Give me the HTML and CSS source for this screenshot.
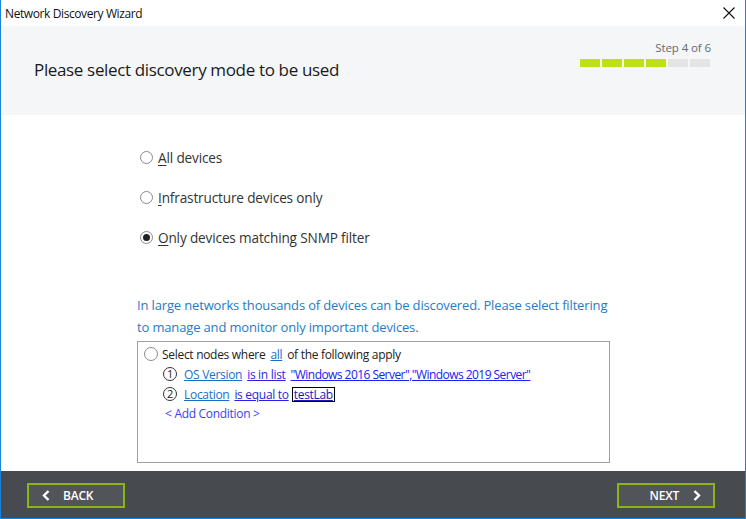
FILE: index.html
```html
<!DOCTYPE html>
<html>
<head>
<meta charset="utf-8">
<link rel="stylesheet" href="styles.css">
</head>
<body>
<div class="window">
  <div class="titlebar">
    <span class="title">Network Discovery Wizard</span>
    <svg class="close" width="12" height="12" viewBox="0 0 12 12"><path d="M0.5 0.5 L11.5 11.5 M11.5 0.5 L0.5 11.5" stroke="#111" stroke-width="1.1" fill="none"/></svg>
  </div>
  <div class="header">
    <h1 class="heading">Please select discovery mode to be used</h1>
    <div class="step">
      <div class="step-text">Step 4 of 6</div>
      <div class="bars">
        <span class="bar done"></span><span class="bar done"></span><span class="bar done"></span><span class="bar done"></span><span class="bar"></span><span class="bar"></span>
      </div>
    </div>
  </div>
  <div class="content">
    <div class="modes">
      <label class="mode"><span class="radio"></span><span><u>A</u>ll devices</span></label>
      <label class="mode"><span class="radio"></span><span><u>I</u>nfrastructure devices only</span></label>
      <label class="mode"><span class="radio checked"></span><span><u>O</u>nly devices matching SNMP filter</span></label>
    </div>
    <p class="hint">In large networks thousands of devices can be discovered. Please select filtering<br>to manage and monitor only important devices.</p>
    <div class="filter">
      <div class="frow first"><span class="radio small"></span><span>Select nodes where</span><a class="lk">all</a><span>of the following apply</span></div>
      <div class="frow cond"><span class="num">1</span><a class="lk">OS Version</a><a class="op">is in list</a><a class="val">"Windows 2016 Server","Windows 2019 Server"</a></div>
      <div class="frow cond"><span class="num">2</span><a class="lk">Location</a><a class="op">is equal to</a><a class="val boxed">testLab</a></div>
      <div class="frow add"><a class="addc">&lt; Add Condition &gt;</a></div>
    </div>
  </div>
  <div class="footer">
    <button class="btn back"><svg width="8" height="11" viewBox="0 0 8 11"><path d="M6.5 1 L2 5.5 L6.5 10" stroke="#fff" stroke-width="2.4" fill="none"/></svg><span>BACK</span></button>
    <button class="btn next"><span>NEXT</span><svg width="8" height="11" viewBox="0 0 8 11"><path d="M1.5 1 L6 5.5 L1.5 10" stroke="#fff" stroke-width="2.4" fill="none"/></svg></button>
  </div>
</div>
</body>
</html>
```

FILE: styles.css
```css
* { box-sizing: border-box; }
html, body { margin: 0; padding: 0; }
body {
  width: 746px;
  height: 519px;
  font-family: "Open Sans", "Noto Sans", sans-serif;
  color: #222;
  background: #fff;
  overflow: hidden;
}
.window {
  width: 746px;
  height: 519px;
  border-left: 1px solid #1883d7;
  border-right: 1px solid #1883d7;
  border-bottom: 1px solid #1883d7;
  display: flex;
  flex-direction: column;
}
.titlebar {
  height: 26px;
  display: flex;
  align-items: center;
  justify-content: space-between;
  padding: 0 10px 0 4px;
  background: #fff;
}
.title {
  font-size: 12px;
  letter-spacing: -0.4px;
  color: #111;
}
.header {
  height: 89px;
  background: #f5f6f8;
  display: flex;
  justify-content: space-between;
  align-items: flex-start;
  padding: 0 35px 0 33px;
}
.heading {
  margin: 32px 0 0;
  font-size: 17px;
  font-weight: normal;
  line-height: 24px;
  color: #1a1a1a;
  letter-spacing: -0.35px;
}
.step {
  margin-top: 14px;
  display: flex;
  flex-direction: column;
  align-items: flex-end;
}
.step-text {
  font-size: 11.5px;
  line-height: 16px;
  color: #666a70;
  letter-spacing: -0.1px;
  margin-right: -1px;
}
.bars {
  display: flex;
  gap: 2px;
  margin-top: 3px;
}
.bar {
  width: 20px;
  height: 8px;
  background: #e4e4e4;
}
.bar.done { background: #bfe014; }
.content {
  flex: 1;
  padding: 32px 0 0 136px;
}
.modes {
  display: flex;
  flex-direction: column;
  gap: 20px;
  padding-left: 3px;
}
.mode {
  display: flex;
  align-items: center;
  gap: 5px;
  height: 20px;
  font-size: 13.6px;
  color: #333;
  letter-spacing: -0.15px;
}
.mode u { text-decoration-thickness: 1px; text-underline-offset: 2px; }
.radio {
  width: 13px;
  height: 13px;
  border: 1px solid #8a8a8a;
  border-radius: 50%;
  background: #fff;
  display: inline-flex;
  align-items: center;
  justify-content: center;
  flex: none;
}
.radio.checked::after {
  content: "";
  width: 7px;
  height: 7px;
  border-radius: 50%;
  background: #222;
}
.hint {
  margin: 47px 0 0;
  font-size: 13px;
  line-height: 22px;
  color: #2a7ac2;
  letter-spacing: -0.15px;
}
.filter {
  margin-top: 3px;
  width: 473px;
  height: 122px;
  border: 1px solid #a0a0a0;
  padding: 2px 0 0 6px;
  font-size: 12px;
  letter-spacing: -0.3px;
}
.frow {
  display: flex;
  align-items: center;
  height: 20px;
  white-space: nowrap;
}
.frow > * + * { margin-left: 5px; }
.frow.first > .radio + span { margin-left: 4px; }
.radio.small { width: 14px; height: 14px; }
.frow.cond, .frow.add { padding-left: 19px; }
.frow.add { height: 19px; }
.num {
  width: 14px;
  height: 14px;
  border: 1px solid #333;
  border-radius: 50%;
  font-size: 11px;
  line-height: 12px;
  text-align: center;
  color: #222;
  flex: none;
}
.num + a { margin-left: 7px; }
a { text-decoration: underline; text-decoration-thickness: 1px; text-underline-offset: 1px; cursor: pointer; }
.lk { color: #1a6fc9; }
.op { color: #2b1fe0; }
.val { color: #2020f0; letter-spacing: -0.55px; }
.boxed {
  border: 1px solid #000;
  color: #1a1ab0;
  padding: 0 1px;
  line-height: 13px;
  margin-left: 3px !important;
  letter-spacing: -0.3px;
}
.addc {
  color: #3c3cff;
  text-decoration: none;
  padding-left: 2px;
}
.footer {
  height: 47px;
  background: #474b4f;
  display: flex;
  justify-content: space-between;
  align-items: flex-start;
  padding: 12px 30px 0 26px;
}
.btn {
  width: 98px;
  height: 25px;
  background: #515559;
  border: 2px solid #8cb319;
  color: #fff;
  font-family: "Open Sans", sans-serif;
  font-size: 12px;
  font-weight: 600;
  display: flex;
  align-items: center;
  padding: 0;
  letter-spacing: -0.2px;
}
.back { padding-left: 13px; }
.back span { margin-left: 13px; }
.next { justify-content: flex-end; padding-right: 12px; }
.next span { margin-right: 14px; }
```
